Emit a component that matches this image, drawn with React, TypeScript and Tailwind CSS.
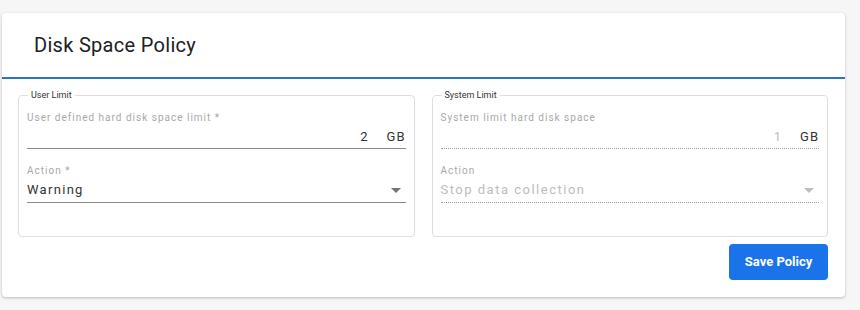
import React from "react";

const Caret = ({ muted }: { muted?: boolean }) => (
  <svg width="10" height="5" viewBox="0 0 10 5" className="shrink-0">
    <path d="M0 0h10L5 5z" fill={muted ? "#bdbdbd" : "#757575"} />
  </svg>
);

const LimitBox = ({
  legend,
  sizeLabel,
  size,
  actionLabel,
  action,
  disabled,
}: {
  legend: string;
  sizeLabel: string;
  size: string;
  actionLabel: string;
  action: string;
  disabled?: boolean;
}) => {
  const line = disabled
    ? "border-b border-dotted border-[#9e9e9e]"
    : "border-b border-[#8a8a8a]";
  return (
    <fieldset className="flex-1 rounded-[4px] border border-[#dedede] px-[8px] pb-[33px]">
      <legend className="ml-[1px] px-[3px] text-[9px] leading-[10px] text-[#333]">
        {legend}
      </legend>
      <div className="mt-[11px] text-[10px] leading-[14px] tracking-[1px] text-[#a8a8a8]">
        {sizeLabel}
      </div>
      <div className={`flex h-[24px] items-center justify-end gap-[18px] text-[13px] tracking-[1px] ${line}`}>
        <span className={disabled ? "text-[#bdbdbd]" : "text-[#333]"}>{size}</span>
        <span className="text-[#333]">GB</span>
      </div>
      <div className="mt-[15px] text-[10px] leading-[14px] tracking-[1px] text-[#a8a8a8]">
        {actionLabel}
      </div>
      <div className={`flex h-[25px] items-center justify-between pr-[5px] text-[13px] ${disabled ? "tracking-[1.5px]" : "tracking-[1.3px]"} ${line}`}>
        <span className={disabled ? "text-[#bdbdbd]" : "text-[#333]"}>{action}</span>
        <Caret muted={disabled} />
      </div>
    </fieldset>
  );
};

export default function App() {
  return (
    <div className="min-h-[310px] bg-[#f6f6f6] pl-[2px] pt-[13px] font-['Roboto',sans-serif]">
      <div className="w-[843px] rounded-[4px] bg-white shadow-[0_1px_3px_rgba(0,0,0,0.25)]">
        <div className="flex h-[64px] items-center pl-[32px] text-[20px] tracking-[0.3px] text-[#202124]">
          Disk Space Policy
        </div>
        <div className="h-[2px] bg-[#2e74ba]" />
        <div className="px-[16px] pb-[17px] pt-[11px]">
          <div className="flex gap-[17px] pr-[1px]">
            <LimitBox
              legend="User Limit"
              sizeLabel="User defined hard disk space limit *"
              size="2"
              actionLabel="Action *"
              action="Warning"
            />
            <LimitBox
              legend="System Limit"
              sizeLabel="System limit hard disk space"
              size="1"
              actionLabel="Action"
              action="Stop data collection"
              disabled
            />
          </div>
          <div className="mt-[7px] flex justify-end pr-[1px]">
            <button className="h-[36px] w-[99px] rounded-[4px] bg-[#1a73e8] text-[13px] font-bold text-white">
              Save Policy
            </button>
          </div>
        </div>
      </div>
    </div>
  );
}
